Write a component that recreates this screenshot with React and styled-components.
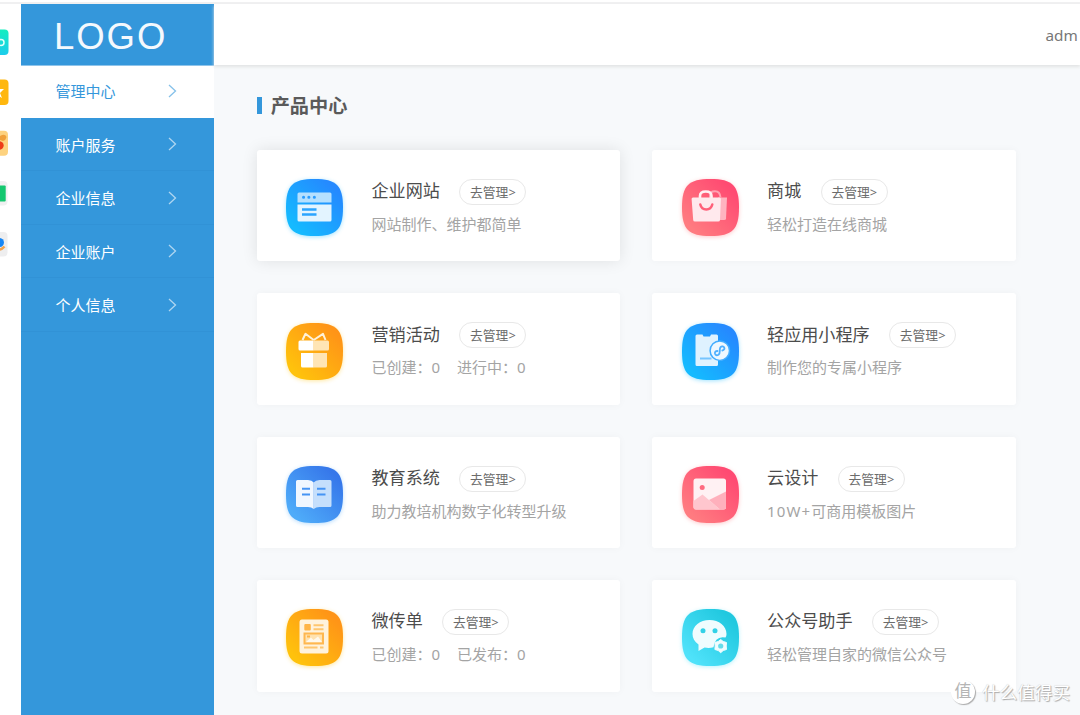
import React from 'react';
import styled, { createGlobalStyle } from 'styled-components';

const GlobalStyle = createGlobalStyle`
  * {
    box-sizing: border-box;
  }
  body {
    margin: 0;
    background: #f7f9fb;
    font-family: "Noto Sans", "Noto Sans CJK SC", sans-serif;
    overflow: hidden;
  }
`

const Page = styled.div`
  display: flex;
  height: 715px;
  padding-top: 4px;
  position: relative;
  overflow: hidden;
  background: linear-gradient(#fff 2px, #f0f0f1 2px, #f0f0f1 4px, #f7f9fb 4px);
`

const Rail = styled.div`
  width: 21.4px;
  flex: none;
  padding-top: 25px;
  display: flex;
  flex-direction: column;
  gap: 24.4px;
  background: #fff;

  svg {
    display: block;
    flex: none;
  }
`

const Sidebar = styled.nav`
  width: 192.6px;
  flex: none;
  background: #3497db;
`

const Logo = styled.div`
  height: 62px;
  padding: 2px 0 0 32.5px;
  border-bottom: 1px solid #8fc4ea;
  color: #f4f9fd;
  font-family: "Liberation Sans", Arial, sans-serif;
  font-size: 36.5px;
  line-height: 62px;
  letter-spacing: 2px;
`

const MenuItem = styled.div`
  display: flex;
  align-items: center;
  justify-content: space-between;
  height: ${({ $active }) => ($active ? 51.5 : 53.5)}px;
  padding: ${({ $active }) => ($active ? '0 36.5px 2px 34px' : '1px 36.5px 0 34px')};
  font-size: 15px;
  color: ${({ $active }) => ($active ? '#3497db' : '#fff')};
  background: ${({ $active }) => ($active ? '#fff' : 'none')};
  border-bottom: ${({ $active }) => ($active ? 'none' : '1px solid #3192d6')};

  svg {
    opacity: 0.6;
  }
`

const Main = styled.div`
  flex: 1;
  min-width: 0;
`

const Header = styled.header`
  height: 60.5px;
  padding-left: 831.5px;
  background: #fff;
  box-shadow: 0 2px 3px #e2e4e4;
  color: #777;
  font-size: 15.3px;
  line-height: 62px;
  white-space: nowrap;
`

const Content = styled.div`
  padding: 30.5px 0 0 42.7px;
`

const Heading = styled.h1`
  display: flex;
  align-items: center;
  gap: 9px;
  height: 20px;
  margin: 0 0 35px;
  color: #5a5a5a;
  font-size: 19.2px;
  font-weight: 700;

  &:before {
    content: "";
    width: 5px;
    height: 17px;
    background: #3497db;
  }
`

const Grid = styled.div`
  display: grid;
  grid-template-columns: 363.6px 363.6px;
  grid-auto-rows: 111.4px;
  gap: 32px;
`

const Card = styled.div`
  display: flex;
  align-items: flex-start;
  gap: 28.5px;
  padding: 29.3px 0 0 29.3px;
  background: #fff;
  border-radius: 3px;
  box-shadow: ${({ $raised }) => ($raised ? '0 0 16px rgba(0, 0, 0, 0.1)' : '0 0 9px rgba(0, 0, 0, 0.035)')};
`

const Icon = styled.svg`
  width: 57px;
  height: 57px;
  flex: none;
  overflow: visible;
  filter: drop-shadow(0 1px 2px ${({ $glow }) => $glow}66);
`

const Title = styled.div`
  display: flex;
  align-items: center;
  gap: 19.5px;
  height: 25px;
  color: #4c4c4c;
  font-size: 17.1px;
  white-space: nowrap;
`

const Name = styled.span`
  position: relative;
  top: -2px;
`

const Manage = styled.span`
  width: 67px;
  height: 26px;
  border: 1px solid #e8e8e8;
  border-radius: 13px;
  color: #6c6c6c;
  font-size: 12.8px;
  line-height: 24px;
  text-align: center;
`

const Desc = styled.div`
  display: flex;
  gap: 17px;
  margin-top: 7.5px;
  color: #a4a4a4;
  font-size: 15px;
  line-height: 24px;
  white-space: nowrap;
`

const Latin = styled.span`
  letter-spacing: 1.1px;
`

const Watermark = styled.div`
  position: absolute;
  left: 951px;
  top: 681px;
  display: flex;
  align-items: center;
  gap: 7px;
  height: 24px;
  color: #fff;
  font-size: 17.6px;
  line-height: 22px;
  padding-bottom: 2px;
  text-shadow: 1px 1px 1px #aaa, 0 0 1px #bbb;
  white-space: nowrap;
`

const Seal = styled.span`
  width: 24px;
  height: 24px;
  border-radius: 50%;
  background: #fff;
  box-shadow: 1px 1px 1px #aaa;
  color: #b5b5b5;
  font-size: 17px;
  line-height: 22px;
  text-align: center;
  text-shadow: none;
`

const squircle = 'M28.5 0C50.5 0 57 6.500 57 28.500C57 50.500 50.500 57 28.500 57C6.500 57 0 50.500 0 28.500C0 6.500 6.500 0 28.500 0Z'

const SiteArt = () => (
  <>
    <path d="M13 13.500H44Q45.500 13.500 45.500 15V23.500H11.500V15Q11.500 13.500 13 13.500Z" fill="#b5e0ff" />
    <path d="M17.500 18.300h.1M22.800 18.300h.1M28.300 18.300h.1" stroke="#2b9dff" strokeWidth="3" strokeLinecap="round" />
    <path d="M11.500 25.500H45.500V41Q45.500 42.500 44 42.500H13Q11.500 42.500 11.500 41Z" fill="#e3f4ff" />
    <path d="M16 30.500H30.500M16 35.500H30.500" stroke="#2ba4ff" strokeWidth="2.600" />
  </>
)

const ShopArt = () => (
  <>
    <path d="M28 19V16Q28 12.200 33 12.200Q38 12.200 38.500 18.500" fill="none" stroke="#ffa3b3" strokeWidth="2" />
    <path d="M36 18.500H45L44 40Q43.900 41 42 41H36Z" fill="#ffb3c0" />
    <path d="M18 20V17Q18 12.500 23.800 12.500Q29.500 12.500 29.500 17V20" fill="none" stroke="#fff0f3" strokeWidth="2.600" />
    <path d="M11 18.500H37.500Q39 18.500 38.900 20L38 41Q37.900 42.500 36.200 42.500H13Q11.300 42.500 11.200 41L9.600 20Q9.500 18.500 11 18.500Z" fill="#ffe9ed" />
    <path d="M18.300 25.500Q19.500 30.500 24.300 30.500Q29 30.500 30.300 25.500" fill="none" stroke="#ff6079" strokeWidth="2.500" strokeLinecap="round" />
  </>
)

const GiftArt = () => (
  <>
    <path d="M27.700 17L19.500 10.800L16.500 17M27.700 17L37 10.800L39.500 17" fill="none" stroke="#fff1d8" strokeWidth="2" strokeLinejoin="round" />
    <path d="M14 17.500H27.700V27.500H14Q12.500 27.500 12.500 26V19Q12.500 17.500 14 17.500ZM15 30H27.700V44.500H16.500Q15 44.500 15 43Z" fill="#fff" />
    <path d="M27.700 17.500H41.500Q43 17.500 43 19V26Q43 27.500 41.500 27.500H27.700ZM27.700 30H41V43Q41 44.500 39.500 44.500H27.700Z" fill="#ffe5b5" />
  </>
)

const AppArt = () => (
  <>
    <path d="M15 11.500H20.500L21.500 13.500H28L29 11.500H34.500Q36 11.500 36 13V41.500Q36 43 34.500 43H15Q13.500 43 13.500 41.500V13Q13.500 11.500 15 11.500Z" fill="#dff2ff" />
    <path d="M18 35.500H29.500" stroke="#76c5ff" strokeWidth="2" />
    <circle cx="37.800" cy="27.700" r="9.700" fill="#eef8ff" stroke="#43adff" strokeWidth="1.500" />
    <path d="M35.500 28Q32.500 28 33 30.500Q33.700 33.200 36.500 31.700Q37.800 30.800 37.800 28V26.500Q38 23.200 40.500 23.400Q43 24 42.300 26.200Q41.700 27.500 40.300 27.500" fill="none" stroke="#4fb0ff" strokeWidth="1.800" strokeLinecap="round" />
  </>
)

const BookArt = () => (
  <>
    <path d="M11.500 14H22Q26 14 27.700 16.500V43Q25.500 41 22 41H11.500Q10 41 10 39.500V15.500Q10 14 11.500 14Z" fill="#f0f7ff" />
    <path d="M27.700 16.500Q29.500 14 33.500 14H44Q45.500 14 45.500 15.500V39.500Q45.500 41 44 41H33.500Q30 41 27.700 43Z" fill="#c5dffc" />
    <path d="M16 22.800H24M16 28.500H24M31 22.800H39.500M31 28.500H39.500" stroke="#4594f4" strokeWidth="2" />
  </>
)

const ImageArt = () => (
  <>
    <rect x="11.500" y="12.500" width="32.500" height="31" rx="2.500" fill="#fff1f3" />
    <circle cx="20.200" cy="21.500" r="2.500" fill="#ff6b80" />
    <path d="M11.500 35L20.500 28.500L38 43.500H14Q11.500 43.500 11.500 41Z" fill="#ffc6ce" />
    <path d="M27 34L44 25.500V41Q44 43.500 41.500 43.500H38Z" fill="#ffb0bc" />
  </>
)

const FlyerArt = () => (
  <>
    <rect x="13.500" y="10.500" width="29" height="34" rx="2.500" fill="#fff2dc" />
    <rect x="18.300" y="15" width="6.500" height="6.500" rx="1" fill="#ffb548" />
    <path d="M27.500 16.300H37.500M27.500 20.300H37.500M18 38.500H31.500M34 38.500H37.500" stroke="#ffc66f" strokeWidth="2" />
    <rect x="18.500" y="24.500" width="18.500" height="10" fill="#ffe2b0" stroke="#ffb750" strokeWidth="2" />
    <path d="M20 33L25 28.500L27.500 31L32 27.500L36 33Z" fill="#fff8ec" />
    <path d="M21 27.500H24" stroke="#ffb548" strokeWidth="2" />
  </>
)

const WechatArt = () => (
  <>
    <path d="M27.500 11C37 11 44.500 17 44.500 25Q44.500 27 43.500 28.500Q33 26.500 31.500 38.300Q27 39.500 22.500 38.500L16.500 42V35.500C12.500 32.500 10.500 29 10.500 25C10.500 17 18 11 27.500 11Z" fill="#effcfe" />
    <circle cx="21" cy="21.800" r="2.500" fill="#32d1e7" />
    <circle cx="33" cy="21.800" r="2.500" fill="#32d1e7" />
    <path d="M38.700 30.500L41.200 32.500L44.500 33.500L44.200 37L44.500 40.500L41.200 41.500L38.700 43.700L36.200 41.500L32.900 40.500L33.200 37L32.900 33.500L36.200 32.500Z" fill="#effcfe" stroke="#effcfe" strokeLinejoin="round" />
    <circle cx="38.700" cy="37" r="2.600" fill="#66dcea" />
  </>
)

const products = [
  { name: '企业网站', desc: ['网站制作、维护都简单'], from: '#15baff', to: '#2589ff', Art: SiteArt, raised: true },
  { name: '商城', desc: ['轻松打造在线商城'], from: '#ff7b80', to: '#ff4a72', Art: ShopArt },
  { name: '营销活动', desc: ['已创建：0', '进行中：0'], from: '#ffc20c', to: '#ff9417', Art: GiftArt },
  { name: '轻应用小程序', desc: ['制作您的专属小程序'], from: '#15baff', to: '#2589ff', Art: AppArt },
  { name: '教育系统', desc: ['助力教培机构数字化转型升级'], from: '#4eabf9', to: '#3677ea', Art: BookArt },
  { name: '云设计', lead: '10W+', desc: ['可商用模板图片'], from: '#ff7b80', to: '#ff4a72', Art: ImageArt },
  { name: '微传单', desc: ['已创建：0', '已发布：0'], from: '#ffc20c', to: '#ff9417', Art: FlyerArt },
  { name: '公众号助手', desc: ['轻松管理自家的微信公众号'], from: '#4fe2fa', to: '#20c8df', Art: WechatArt },
]

const menu = ['管理中心', '账户服务', '企业信息', '企业账户', '个人信息']

const Chevron = () => (
  <svg width="9" height="14" viewBox="0 0 9 14" fill="none" stroke="currentColor" strokeWidth="1.300">
    <path d="M1 1L7.500 7L1 13" />
  </svg>
)

const RailIcons = () => (
  <Rail>
    <svg width="9" height="26">
      <defs>
        <linearGradient id="teal" x1="0" y1="0" x2="0" y2="1">
          <stop stopColor="#13eec0" />
          <stop offset="1" stopColor="#1dccec" />
        </linearGradient>
      </defs>
      <rect x="-17" y=".5" width="25.500" height="25.500" rx="4" fill="url(#teal)" />
      <circle cx="1" cy="13.500" r="3" fill="none" stroke="#e4fffb" strokeWidth="1.500" />
    </svg>
    <svg width="9" height="26">
      <rect x="-17" y=".5" width="25.500" height="25.500" rx="4" fill="#ffb70e" />
      <path d="M-3 10H4L0 14L2 19L-3 16Z" fill="#fff" />
    </svg>
    <svg width="9" height="26">
      <rect x="-17" y=".8" width="25" height="25" rx="4" fill="#fdd27f" />
      <path d="M0 6Q5 3 6.500 7Q6 10 3 11L0 10Z" fill="#f0a03a" />
      <circle cx="-.5" cy="15.500" r="4.200" fill="#ee3c18" />
    </svg>
    <svg width="9" height="26">
      <rect x="-17" y="1" width="24.500" height="24.500" rx="4" fill="#f0f0f1" />
      <rect x="-10" y="5.500" width="15.700" height="16" rx="1" fill="#14c76f" />
    </svg>
    <svg width="9" height="26">
      <rect x="-17" y="1" width="24.500" height="24.500" rx="4" fill="#eeeeef" />
      <circle cx="-.5" cy="11.500" r="4.500" fill="#1787f5" />
      <path d="M-1 18.500Q2 18.500 4.500 15.500" fill="none" stroke="#f4a34c" strokeWidth="2.500" />
    </svg>
  </Rail>
)

const ProductCard = ({ name, lead, desc, from, to, Art, raised, id }) => (
  <Card $raised={raised}>
    <Icon viewBox="0 0 57 57" $glow={from}>
      <defs>
        <linearGradient id={id} x1="0" y1="1" x2="1" y2="0">
          <stop offset=".15" stopColor={from} />
          <stop offset=".85" stopColor={to} />
        </linearGradient>
      </defs>
      <path d={squircle} fill={`url(#${id})`} />
      <Art />
    </Icon>
    <div>
      <Title>
        <Name>{name}</Name>
        <Manage>去管理&gt;</Manage>
      </Title>
      <Desc>
        {desc.map((text) => (
          <span key={text}>
            {lead && <Latin>{lead}</Latin>}
            {text}
          </span>
        ))}
      </Desc>
    </div>
  </Card>
)

const App = () => (
  <>
    <GlobalStyle />
    <Page>
      <RailIcons />
      <Sidebar>
        <Logo>LOGO</Logo>
        {menu.map((label, i) => (
          <MenuItem key={label} $active={i === 0}>
            {label}
            <Chevron />
          </MenuItem>
        ))}
      </Sidebar>
      <Main>
        <Header>adm</Header>
        <Content>
          <Heading>产品中心</Heading>
          <Grid>
            {products.map((product, i) => (
              <ProductCard key={product.name} id={`fill${i}`} {...product} />
            ))}
          </Grid>
        </Content>
      </Main>
      <Watermark>
        <Seal>值</Seal>
        什么值得买
      </Watermark>
    </Page>
  </>
)

export default App;
